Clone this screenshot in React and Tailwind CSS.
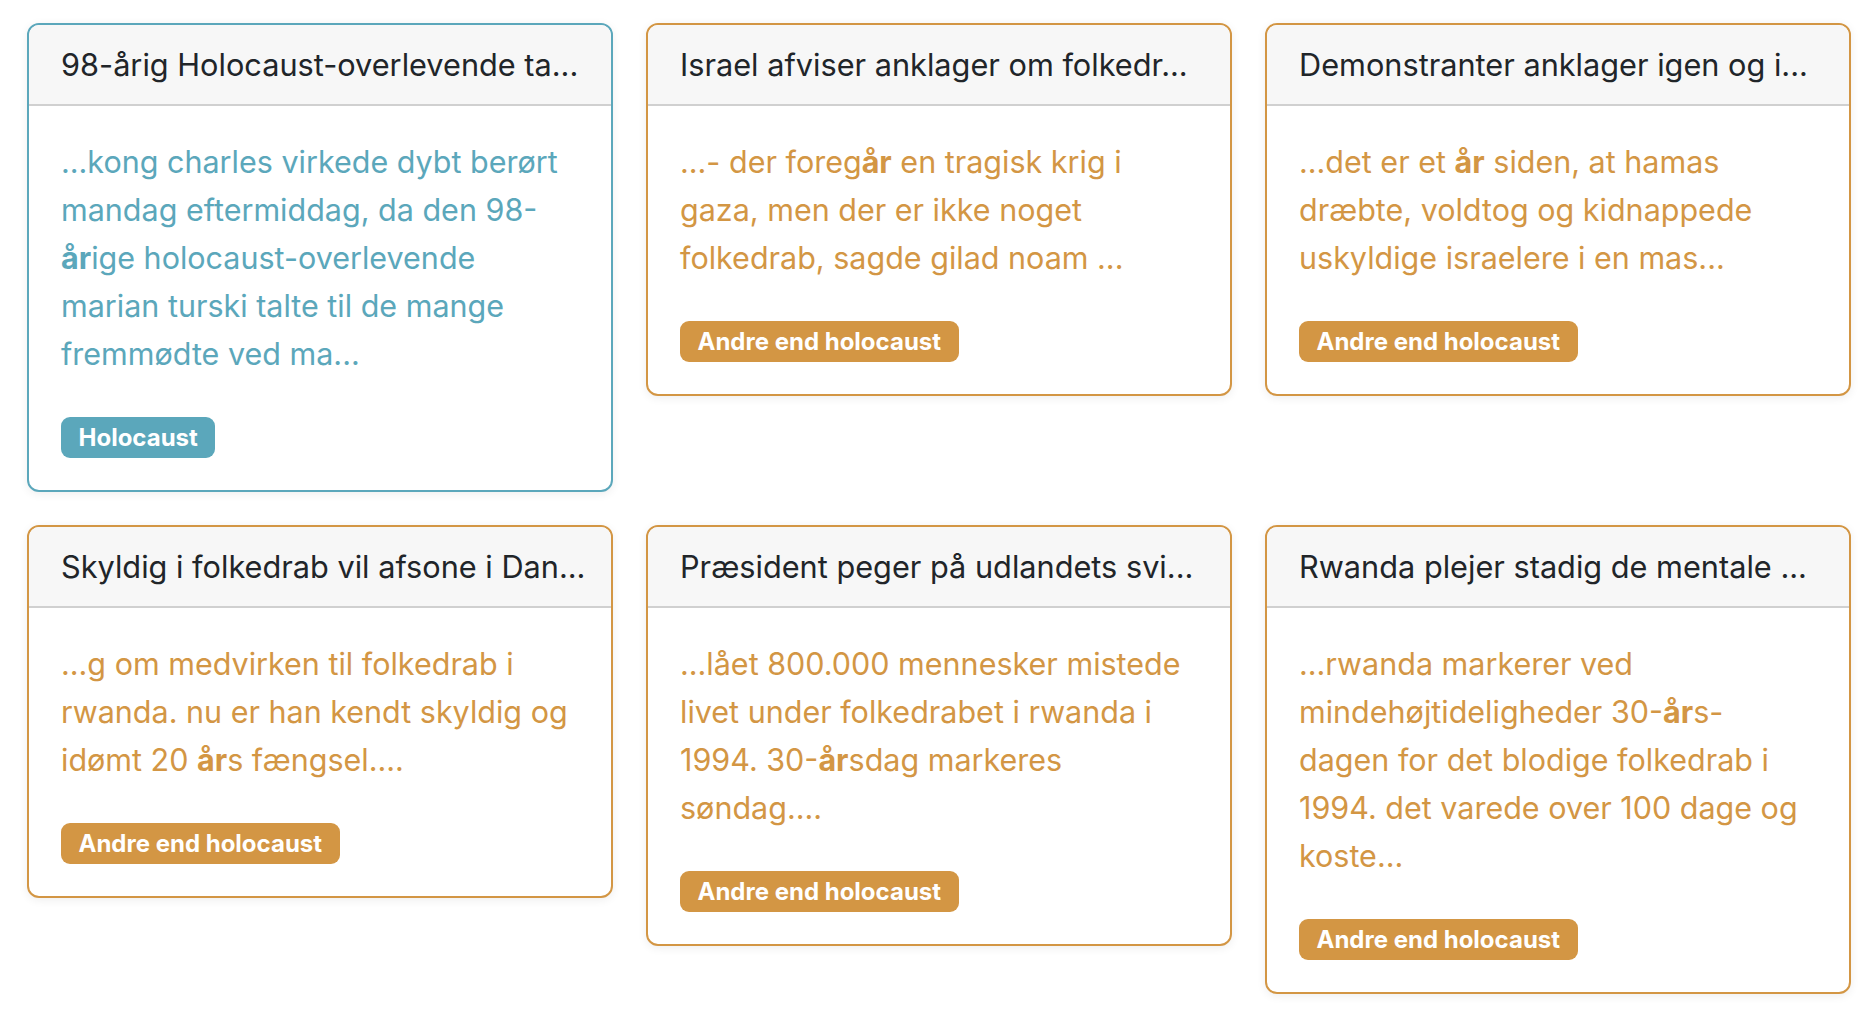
const TEAL = 'teal';
const ORANGE = 'orange';

const cards = [
  {
    title: '98-årig Holocaust-overlevende ta...',
    tone: TEAL,
    tag: 'Holocaust',
    text: ['...kong charles virkede dybt berørt mandag eftermiddag, da den 98-', 'år', 'ige holocaust-overlevende marian turski talte til de mange fremmødte ved ma...'],
  },
  {
    title: 'Israel afviser anklager om folkedr...',
    tone: ORANGE,
    tag: 'Andre end holocaust',
    text: ['...- der foreg', 'år', ' en tragisk krig i gaza, men der er ikke noget folkedrab, sagde gilad noam ...'],
  },
  {
    title: 'Demonstranter anklager igen og i...',
    tone: ORANGE,
    tag: 'Andre end holocaust',
    text: ['...det er et ', 'år', ' siden, at hamas dræbte, voldtog og kidnappede uskyldige israelere i en mas...'],
  },
  {
    title: 'Skyldig i folkedrab vil afsone i Dan...',
    tone: ORANGE,
    tag: 'Andre end holocaust',
    text: ['...g om medvirken til folkedrab i rwanda. nu er han kendt skyldig og idømt 20 ', 'år', 's fængsel....'],
  },
  {
    title: 'Præsident peger på udlandets svi...',
    tone: ORANGE,
    tag: 'Andre end holocaust',
    text: ['...lået 800.000 mennesker mistede livet under folkedrabet i rwanda i 1994. 30-', 'år', 'sdag markeres søndag....'],
  },
  {
    title: 'Rwanda plejer stadig de mentale ...',
    tone: ORANGE,
    tag: 'Andre end holocaust',
    text: ['...rwanda markerer ved mindehøjtideligheder 30-', 'år', 's-dagen for det blodige folkedrab i 1994. det varede over 100 dage og koste...'],
  },
];

function Card({ card }) {
  const teal = card.tone === TEAL;
  return (
    <div
      className={`rounded-[12px] border-2 bg-white overflow-hidden shadow-[0_2px_10px_rgba(0,0,0,0.07)] ${
        teal ? 'border-[#5ba7bb]' : 'border-[#d39644]'
      }`}
    >
      {/* header */}
      <div className="bg-[#f7f7f7] border-b-2 border-[#d0d0d0] px-[32px] py-[16px] text-[30.7px] leading-[47px] text-[#212529] whitespace-nowrap overflow-hidden">
        {card.title}
      </div>
      {/* body */}
      <div className="p-[32px]">
        <p className={`text-[30.5px] leading-[48px] mb-[39px] pr-[7px] ${teal ? 'text-[#5ba7bb]' : 'text-[#d39644]'}`}>
          {card.text[0]}
          <b className="font-bold">{card.text[1]}</b>
          {card.text[2]}
        </p>
        <div className="flex">
          <span
            className={`h-[41px] flex items-center px-[17.5px] rounded-[9px] text-white font-bold text-[24px] leading-none ${
              teal ? 'bg-[#5ba7bb]' : 'bg-[#d39644]'
            }`}
          >
            {card.tag}
          </span>
        </div>
      </div>
    </div>
  );
}

export default function App() {
  return (
    <div className="min-h-screen bg-white pt-[23px] pl-[27px] font-['Inter','Noto_Sans',sans-serif]">
      <div className="grid grid-cols-[586px_586px_586px] gap-x-[33px] gap-y-[33px] items-start">
        {cards.map((c, i) => (
          <Card key={i} card={c} />
        ))}
      </div>
    </div>
  );
}
